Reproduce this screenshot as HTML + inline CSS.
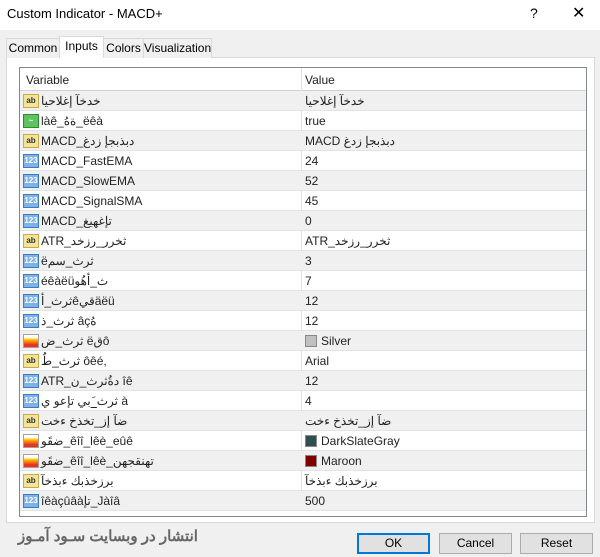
<!DOCTYPE html><html><head><meta charset="utf-8"><style>
*{margin:0;padding:0;box-sizing:border-box}
body{width:600px;height:557px;background:#f0f0f0;font-family:"Liberation Sans","Noto Sans CJK SC",sans-serif;font-size:12px;color:#000;position:relative;overflow:hidden}
.title{position:absolute;left:0;top:0;width:600px;height:30px;background:#fff;font-size:13px}
.title span{position:absolute;left:7px;top:6px}
.q{position:absolute;left:530px;top:5px;font-size:14px}
.x{position:absolute;left:572px;top:3px;font-size:16px}
.tab{position:absolute;top:38px;height:20px;border:1px solid #d9d9d9;border-bottom:none;background:#f0f0f0;font-size:12px;text-align:center;line-height:19px;white-space:nowrap}
.tab.sel{background:#fff;top:36px;height:22px;line-height:19px}
.panel{position:absolute;left:6px;top:57px;width:589px;height:466px;background:#fff;border:1px solid #d9d9d9}
.tbl{position:absolute;left:19px;top:67px;width:568px;height:450px;border:1px solid #828790;background:#fff}
.row{position:absolute;left:0;width:566px;height:20px;border-bottom:1px solid #e3e3e3}
.row.g{background:#f0f0f0}
.c1{position:absolute;left:21px;top:3px;color:#222}
.c2{position:absolute;left:285px;top:3px;color:#222}
.sep{position:absolute;left:281px;top:0;width:1px;height:420px;background:#e3e3e3}
.ic{position:absolute;left:3px;top:3px;width:16px;height:14px;font-size:8px;line-height:12px;text-align:center;font-weight:bold;border:1px solid}
.ab{background:#f3e49a;border-color:#c9a94a;color:#333}
.n{background:#7fb3e6;border-color:#3a7dc2;color:#fff}
.b{background:#5fc35f;border-color:#2e8b2e;color:#fff}
.cl{background:linear-gradient(#fff 20%,#f7c000 40%,#f03020 80%);border-color:#a0a0a0}
.sw{display:inline-block;width:12px;height:12px;vertical-align:-2px;margin-right:4px;border:1px solid #888}
.btn{position:absolute;top:533px;width:73px;height:21px;border:1px solid #adadad;background:#e1e1e1;text-align:center;line-height:19px}
.wm{position:absolute;left:18px;top:527px;font-size:15px;font-weight:bold;color:#666;direction:rtl;white-space:nowrap}
</style></head><body>
<div class="title"><span>Custom Indicator - MACD+</span><div class="q">?</div><div class="x">✕</div></div>
<div class="panel"></div>
<div class="tab" style="left:6px;width:54px">Common</div>
<div class="tab sel" style="left:59px;width:45px">Inputs</div>
<div class="tab" style="left:103px;width:41px">Colors</div>
<div class="tab" style="left:143px;width:69px">Visualization</div>
<div class="tbl">
<div class="row" style="top:0;height:23px;border-bottom:1px solid #d0d0d0"><span class="c1" style="left:6px;top:5px">Variable</span><span class="c2" style="top:5px">Value</span></div>
<div class="sep" style="top:0;height:23px"></div>
<div style="position:absolute;top:23px;left:0">
<div class="sep"></div>
<div class="row g" style="top:0"><div class="ic ab">ab</div><span class="c1">خدخآ إغلاحيا</span><span class="c2">خدخآ إغلاحيا</span></div>
<div class="row" style="top:20px"><div class="ic b">~</div><span class="c1">làê_ةهُ_ëêà</span><span class="c2">true</span></div>
<div class="row g" style="top:40px"><div class="ic ab">ab</div><span class="c1">MACD_دبذبجإ زدغ</span><span class="c2">MACD دبذبجإ زدغ</span></div>
<div class="row" style="top:60px"><div class="ic n">123</div><span class="c1">MACD_FastEMA</span><span class="c2">24</span></div>
<div class="row g" style="top:80px"><div class="ic n">123</div><span class="c1">MACD_SlowEMA</span><span class="c2">52</span></div>
<div class="row" style="top:100px"><div class="ic n">123</div><span class="c1">MACD_SignalSMA</span><span class="c2">45</span></div>
<div class="row g" style="top:120px"><div class="ic n">123</div><span class="c1">MACD_تإغهيغ</span><span class="c2">0</span></div>
<div class="row" style="top:140px"><div class="ic ab">ab</div><span class="c1">ATR_ثخرر_رزخد</span><span class="c2">ATR_ثخرر_رزخد</span></div>
<div class="row g" style="top:160px"><div class="ic n">123</div><span class="c1">ëثرث_سم</span><span class="c2">3</span></div>
<div class="row" style="top:180px"><div class="ic n">123</div><span class="c1">éêàëüث_أهُو</span><span class="c2">7</span></div>
<div class="row g" style="top:200px"><div class="ic n">123</div><span class="c1">ثرث_أêقيäëü</span><span class="c2">12</span></div>
<div class="row" style="top:220px"><div class="ic n">123</div><span class="c1">ثرث_ذ âçهُ</span><span class="c2">12</span></div>
<div class="row g" style="top:240px"><div class="ic cl"></div><span class="c1">ثرث_ض ëقô</span><span class="c2"><span class="sw" style="background:#c0c0c0"></span>Silver</span></div>
<div class="row" style="top:260px"><div class="ic ab">ab</div><span class="c1">ثرث_طٌ ôêé,</span><span class="c2">Arial</span></div>
<div class="row g" style="top:280px"><div class="ic n">123</div><span class="c1">ATR_دةُثرث_ن îê</span><span class="c2">12</span></div>
<div class="row" style="top:300px"><div class="ic n">123</div><span class="c1">ثرث_َبي تإعو ي à</span><span class="c2">4</span></div>
<div class="row g" style="top:320px"><div class="ic ab">ab</div><span class="c1">ضآ إز_تخذخ ءخت</span><span class="c2">ضآ إز_تخذخ ءخت</span></div>
<div class="row" style="top:340px"><div class="ic cl"></div><span class="c1">ضقَو_êîî_lêè_eûê</span><span class="c2"><span class="sw" style="background:#2f4f4f"></span>DarkSlateGray</span></div>
<div class="row g" style="top:360px"><div class="ic cl"></div><span class="c1">ضقَو_êîî_lêè_تهنقجهن</span><span class="c2"><span class="sw" style="background:#800000"></span>Maroon</span></div>
<div class="row" style="top:380px"><div class="ic ab">ab</div><span class="c1">برزخذبك ءبذخآ</span><span class="c2">برزخذبك ءبذخآ</span></div>
<div class="row g" style="top:400px"><div class="ic n">123</div><span class="c1">îêàçûâàتإ_Jàîâ</span><span class="c2">500</span></div>
</div></div>
<div class="wm">انتشار در وبسایت سـود آمـوز</div>
<div class="btn" style="left:357px;border:2px solid #0078d7;line-height:17px">OK</div>
<div class="btn" style="left:439px">Cancel</div>
<div class="btn" style="left:520px">Reset</div>
</body></html>
